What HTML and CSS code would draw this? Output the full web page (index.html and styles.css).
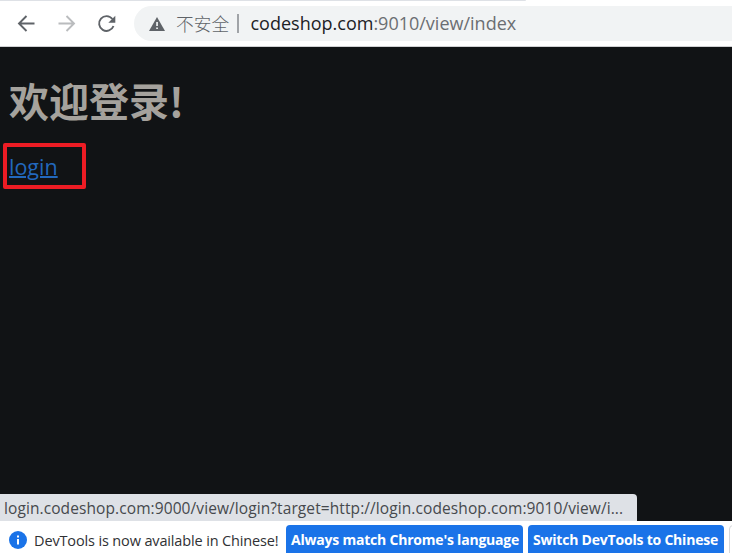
FILE: index.html
```html
<!DOCTYPE html>
<html lang="zh-CN">
<head>
<meta charset="utf-8">
<title>欢迎登录</title>
<link rel="stylesheet" href="styles.css">
</head>
<body>
<header class="toolbar">
  <div class="tabstrip"></div>
  <nav class="nav">
    <svg class="icon" viewBox="0 0 20 20"><path d="M18.500 9.500H3.500M10.500 2L3 9.500l7.500 7.500"/></svg>
    <svg class="icon disabled" viewBox="0 0 20 20"><path d="M2.500 9.500h15M10.500 2L18 9.500 10.500 17"/></svg>
    <svg class="icon" viewBox="0 0 20 20"><path d="M16.400 5A7.400 7.400 0 1 0 17.500 12"/><path class="solid" d="M19.300 1.800v7h-7z"/></svg>
  </nav>
  <div class="address">
    <svg class="warn" viewBox="0 0 16 14"><path d="M8 0l8 14H0z"/><path class="mark" d="M7.200 5h1.700v4H7.200zM7.200 10.400h1.700v1.700H7.200z"/></svg>
    <span class="insecure">不安全</span>
    <span class="divider"></span>
    <span class="url"><b>codeshop.com</b>:9010/view/index</span>
  </div>
</header>
<main class="page">
  <h1>欢迎登录!</h1>
  <div class="marked"><a href="#">login</a></div>
  <div class="status"><span>login.codeshop.com:9000/view/login?target=http://login.codeshop.com:9010/view/i...</span></div>
</main>
<footer class="infobar">
  <svg class="info" viewBox="0 0 18 18"><circle cx="9" cy="9" r="9"/><path d="M8 4.500h2v2H8zM8 8h2v5.500H8z"/></svg>
  <span class="message">DevTools is now available in Chinese!</span>
  <button class="match"><span>Always match Chrome's language</span></button>
  <button class="switch"><span>Switch DevTools to Chinese</span></button>
  <div class="more"></div>
</footer>
</body>
</html>
```
FILE: styles.css
```css
* { box-sizing: border-box; }
body {
  margin: 0;
  width: 732px;
  height: 553px;
  overflow: hidden;
  display: flex;
  flex-direction: column;
  background: #fff;
  font-family: "Open Sans", "Noto Sans CJK SC", sans-serif;
  white-space: nowrap;
}
.toolbar {
  height: 47px;
  flex: none;
  display: grid;
  grid-template-columns: 134px 1fr;
  grid-template-rows: 1px 5px 35px;
  border-bottom: 1px solid #d0d1d3;
}
.tabstrip { grid-column: 1 / 3; width: 526px; background: #dee1e6; border-radius: 0 0 3px 0; }
.nav { grid-row: 3; display: flex; align-items: center; padding-left: 16px; gap: 20px; }
.icon { width: 20px; height: 20px; fill: none; stroke: #5f6368; stroke-width: 1.9; }
.icon .solid { fill: #5f6368; stroke: none; }
.disabled { stroke: #babcbe; }
.address {
  grid-row: 3;
  display: flex;
  align-items: center;
  background: #f1f3f4;
  border-radius: 18px 0 0 18px;
  padding-left: 15px;
}
.warn { width: 16px; height: 14px; margin-top: 1px; fill: #5f6368; }
.warn .mark { fill: #f1f3f4; }
.insecure { margin: -2px 0 0 11px; width: 55px; font: 300 17.700px "Noto Sans CJK SC", sans-serif; color: #5f6368; }
.divider { width: 2px; height: 19px; margin-left: 6px; background: #a0a3a7; }
.url { margin: -2px 0 0 11.500px; font-size: 18px; color: #6b6e72; }
.url b { font-weight: 400; color: #202124; }
.page { position: relative; height: 474px; flex: none; background: #111315; padding: 26px 0 0 3px; }
h1 { margin: 0 0 0 6px; height: 70px; font: 700 40px/54px "Noto Sans CJK SC", sans-serif; color: #a5a29d; }
.marked { width: 83px; height: 46px; border: 4px solid #ed1c24; border-radius: 2px; padding-left: 2px; }
.marked a { display: block; font-size: 21.500px; line-height: 39px; color: #2268bd; text-decoration-thickness: 2px; }
.status {
  position: absolute;
  left: 0;
  bottom: 0;
  width: 637px;
  height: 27px;
  background: #dee1e6;
  border-radius: 0 4px 0 0;
  padding-left: 4px;
  font-size: 15.500px;
  letter-spacing: 0.090px;
  line-height: 28px;
  color: #46494d;
}
.infobar { height: 32px; flex: none; display: flex; align-items: flex-start; padding: 4px 0 0 9px; font-size: 14.500px; color: #303134; }
.info { width: 18px; height: 18px; margin-top: 6px; fill: #1a73e8; flex: none; }
.info path { fill: #fff; }
.message { width: 252px; margin-left: 7px; line-height: 31px; letter-spacing: -0.140px; flex: none; }
.infobar button { height: 32px; border: 0; border-radius: 4px; padding: 0 0 2px 5px; background: #1a73e8; color: #fff; font: 700 14px/30px "Open Sans", sans-serif; letter-spacing: -0.210px; text-align: left; flex: none; }
.infobar .match { width: 237px; }
.infobar .switch { width: 196px; margin-left: 5px; }
.more { width: 30px; height: 32px; margin-left: 5px; border: 1px solid #d5d7da; border-radius: 4px; flex: none; }
```
